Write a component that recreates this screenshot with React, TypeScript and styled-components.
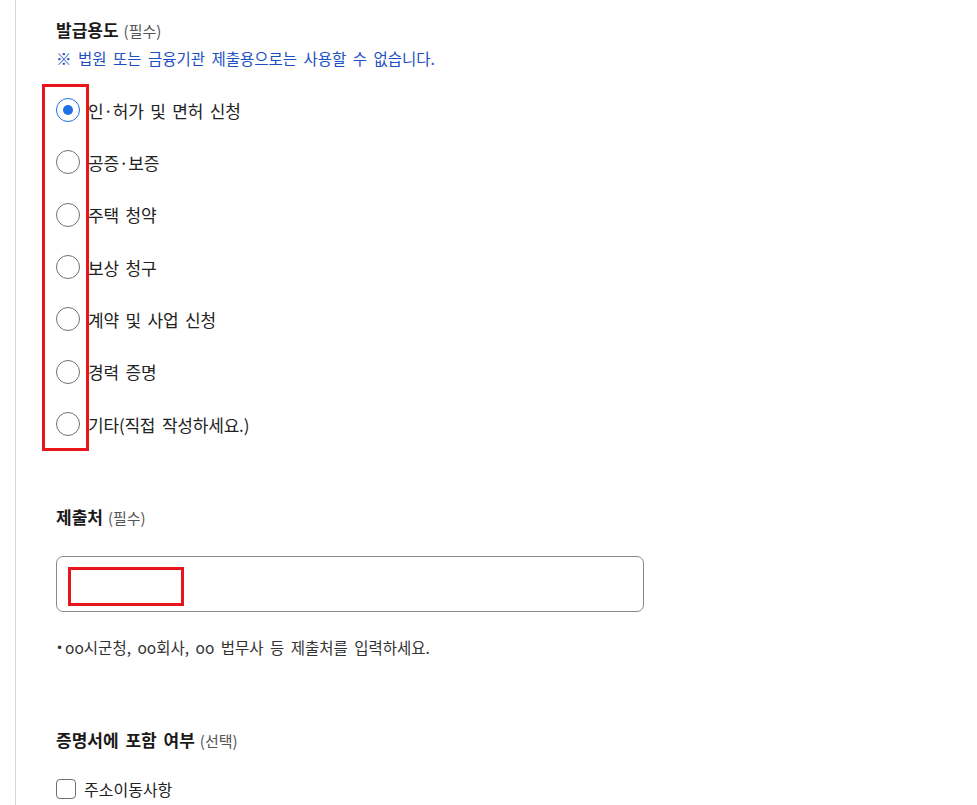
import React from "react";
import styled, { createGlobalStyle } from "styled-components";

const Global = createGlobalStyle`
  html, body { margin: 0; padding: 0; background: #fff; }
  body { font-family: "Noto Sans CJK KR", "Noto Sans", sans-serif; color: #222; }
  * { box-sizing: border-box; }
`;

const Page = styled.div`
  margin-left: 15px;
  border-left: 1px solid #d6d6d6;
  min-height: 805px;
  padding: 18px 0 0 40px;
`;

const Section = styled.section<{ $top?: number }>`
  margin-top: ${(p) => p.$top ?? 0}px;
`;

const Title = styled.h3`
  margin: 0;
  font-size: 17px;
  line-height: 24px;
  font-weight: 700;
  color: #1a1a1a;
  word-spacing: 3px;
`;

const Sub = styled.span`
  font-size: 15px;
  font-weight: 400;
  color: #555;
  margin-left: 5px;
  word-spacing: 0;
`;

const Note = styled.p`
  margin: 5px 0 0;
  font-size: 15.5px;
  line-height: 20px;
  color: #1d4fc4;
  word-spacing: 3px;
`;

const RadioGroup = styled.div`
  position: relative;
  margin-top: 16px;
  display: flex;
  flex-direction: column;
`;

const Highlight = styled.div`
  position: absolute;
  pointer-events: none;
  border: 3px solid #e8161b;
`;

const RadioRow = styled.label`
  height: 52.33px;
  display: flex;
  align-items: center;
  gap: 8px;
  font-size: 17px;
  color: #222;
  letter-spacing: -0.2px;
  word-spacing: 3px;
  cursor: pointer;
`;

const RadioCircle = styled.span<{ $checked?: boolean }>`
  width: 24px;
  height: 24px;
  border-radius: 50%;
  border: 1.5px solid ${(p) => (p.$checked ? "#1f6fe5" : "#707070")};
  display: flex;
  align-items: center;
  justify-content: center;
  flex-shrink: 0;
  &::after {
    content: "";
    width: 10px;
    height: 10px;
    border-radius: 50%;
    background: #1f6fe5;
    display: ${(p) => (p.$checked ? "block" : "none")};
  }
`;

const InputWrap = styled.div`
  position: relative;
  width: 588px;
  height: 56px;
  margin-top: 26px;
  border: 1px solid #8a8a8a;
  border-radius: 7px;
`;

const Hint = styled.p`
  margin: 25px 0 0;
  font-size: 15.5px;
  line-height: 20px;
  color: #333;
  word-spacing: 3px;
  &::before {
    content: "•";
    font-family: "DejaVu Sans", sans-serif;
    font-size: 12px;
    margin-right: 2px;
    vertical-align: 2px;
  }
`;

const CheckRow = styled.label`
  margin-top: 24px;
  display: flex;
  align-items: center;
  gap: 8px;
  font-size: 16px;
  color: #222;
  height: 24px;
`;

const CheckBox = styled.span`
  width: 20px;
  height: 20px;
  border: 1.5px solid #6f6f6f;
  border-radius: 4px;
  flex-shrink: 0;
`;

const options = [
  "인·허가 및 면허 신청",
  "공증·보증",
  "주택 청약",
  "보상 청구",
  "계약 및 사업 신청",
  "경력 증명",
  "기타(직접 작성하세요.)",
];

export default function App() {
  return (
    <>
      <Global />
      <Page>
        <Section>
          <Title>
            발급용도<Sub>(필수)</Sub>
          </Title>
          <Note>※ 법원 또는 금융기관 제출용으로는 사용할 수 없습니다.</Note>
          <RadioGroup>
            {options.map((o, i) => (
              <RadioRow key={o}>
                <RadioCircle $checked={i === 0} />
                {o}
              </RadioRow>
            ))}
            <Highlight style={{ left: -14, top: 0, width: 47, height: 367 }} />
          </RadioGroup>
        </Section>
        <Section $top={55}>
          <Title>
            제출처<Sub>(필수)</Sub>
          </Title>
          <InputWrap>
            <Highlight style={{ left: 11, top: 10, width: 116, height: 39 }} />
          </InputWrap>
          <Hint>oo시군청, oo회사, oo 법무사 등 제출처를 입력하세요.</Hint>
        </Section>
        <Section $top={70}>
          <Title>
            증명서에 포함 여부<Sub>(선택)</Sub>
          </Title>
          <CheckRow>
            <CheckBox />
            주소이동사항
          </CheckRow>
        </Section>
      </Page>
    </>
  );
}
